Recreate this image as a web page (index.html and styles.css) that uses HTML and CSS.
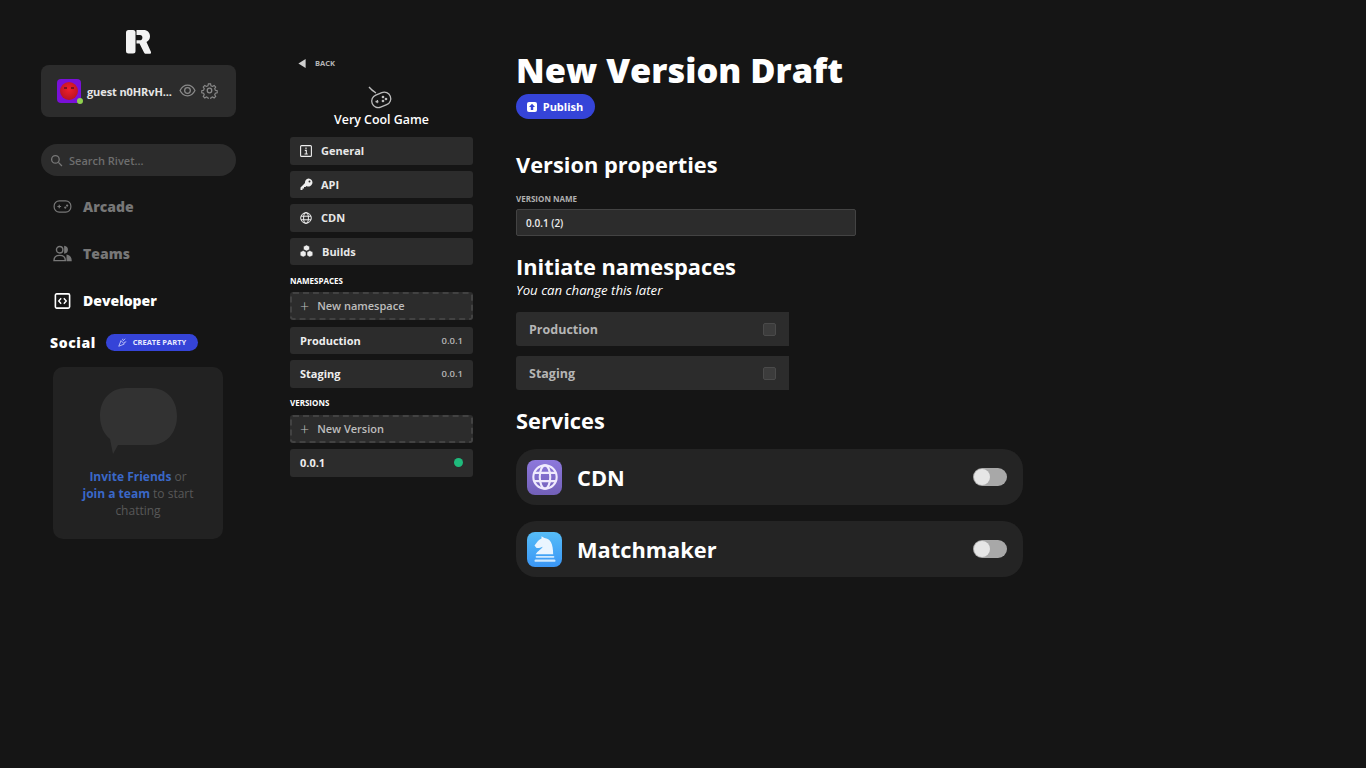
FILE: index.html
```html
<!DOCTYPE html>
<html lang="en">

<head>
    <meta charset="UTF-8">
    <title>New Version Draft</title>
    <link rel="stylesheet" href="styles.css">
</head>

<body>
    <div class="app">
        <aside class="sidebar">
            <svg class="logo" viewBox="0 0 25 24" width="25" height="24">
                <rect x="0" y="0" width="9.500" height="23.500" rx="2.500" fill="#f2f2f2" />
                <path d="M10.500 0H17.500C21.500 0 24 2.600 24 6.300C24 9 22.600 11 20.500 12L25 22C25.400 23 24.900 23.700 24 23.700H20C19 23.700 18.400 23.300 18 22.400L13.500 13.500H10.500V10.200H14.500C15.800 10.200 16.400 9 16.400 7.600C16.400 6 15.600 5 14 5H10.500Z" fill="#f2f2f2" />
            </svg>

            <div class="user-card">
                <div class="avatar">
                    <div class="avatar-face">
                        <span class="avatar-eyes"></span>
                    </div>
                    <span class="avatar-dot"></span>
                </div>
                <span class="user-name">guest n0HRvH...</span>
                <svg class="user-icon" viewBox="0 0 24 24" width="17" height="17" fill="none" stroke="#8a8a8a" stroke-width="1.800">
                    <path d="M1.500 12C4 7 8 4.500 12 4.500S20 7 22.500 12C20 17 16 19.500 12 19.500S4 17 1.500 12Z" />
                    <circle cx="12" cy="12" r="4" />
                </svg>
                <svg class="user-icon" viewBox="0 0 24 24" width="17" height="17" fill="none" stroke="#8a8a8a" stroke-width="1.800">
                    <circle cx="12" cy="12" r="3.200" />
                    <path d="M10.200 1.500h3.600l.6 3 2.500 1.100 2.600-1.600 2.500 2.600-1.600 2.500 1 2.500 3 .6v3.600l-3 .6-1 2.500 1.600 2.500-2.500 2.600-2.600-1.600-2.500 1-.6 3h-3.600l-.6-3-2.500-1-2.600 1.600-2.500-2.600 1.600-2.500-1-2.500-3-.6v-3.600l3-.6 1-2.500-1.600-2.500 2.500-2.600 2.600 1.600 2.500-1.100Z" transform="translate(1.400 1.400) scale(.88)" />
                </svg>
            </div>

            <div class="search">
                <svg viewBox="0 0 24 24" width="13" height="13" fill="none" stroke="#777" stroke-width="2.400">
                    <circle cx="10" cy="10" r="7" />
                    <path d="M15.500 15.500L22 22" />
                </svg>
                <span>Search Rivet...</span>
            </div>

            <nav class="nav">
                <a class="nav-item">
                    <svg viewBox="0 0 20 14" width="19" height="13" fill="none" stroke="#777" stroke-width="1.300">
                        <rect x="1" y="1" width="18" height="12" rx="5.500" />
                        <path d="M4.500 7h4M6.500 5v4" />
                        <circle cx="13" cy="8.200" r=".6" fill="#777" />
                        <circle cx="15" cy="6" r=".6" fill="#777" />
                    </svg>
                    Arcade
                </a>
                <a class="nav-item">
                    <svg viewBox="0 0 20 18" width="19" height="17" fill="none" stroke="#777" stroke-width="1.500">
                        <circle cx="7" cy="5" r="3.400" />
                        <path d="M1 16.500c0-3.500 2.500-5.500 6-5.500s6 2 6 5.500Z" />
                        <path d="M12.500 1.800a3.300 3.300 0 0 1 0 6.400Z" fill="#777" />
                        <path d="M15 11c2.500.5 4 2.500 4 5.500h-4Z" fill="#777" />
                    </svg>
                    Teams
                </a>
                <a class="nav-item active">
                    <svg viewBox="0 0 18 18" width="16" height="16" fill="none" stroke="#fff">
                        <rect x="1" y="1" width="16" height="16" rx="1.500" stroke-width="1.800" />
                        <path d="M7.500 6L4.800 9l2.700 3M10.500 6l2.700 3-2.700 3" stroke-width="1.600" />
                    </svg>
                    Developer
                </a>
            </nav>

            <div class="social-head">
                <span class="social-title">Social</span>
                <span class="party-btn">
                    <svg viewBox="0 0 12 12" width="9" height="9" fill="none" stroke="#dfe2ff" stroke-width="1">
                        <path d="M1 11L4 3.500L8.500 8Z" />
                        <path d="M6.500 4L9.500 1M8 6l3-1M6 2.500L6.500 1" />
                    </svg>
                    CREATE PARTY
                </span>
            </div>

            <div class="chat-card">
                <svg class="chat-bubble" viewBox="0 0 77 67" width="77" height="67">
                    <path d="M26 1H51C66 1 77 12 77 29C77 46 66 58 51 58H18L13 67L10 52C4 47 0 39 0 29C0 12 11 1 26 1Z" fill="#323232" />
                </svg>
                <p class="chat-text"><a>Invite Friends</a> or<br><a>join a team</a> to start<br>chatting</p>
            </div>
        </aside>

        <section class="game-menu">
            <div class="back">
                <svg viewBox="0 0 8 10" width="8" height="9">
                    <path d="M0 5L8 0V10Z" fill="#cfcfcf" />
                </svg>
                BACK
            </div>
            <svg class="game-icon" viewBox="0 0 24 24" width="24" height="24" fill="none" stroke="#bdbdbd" stroke-width="1.300">
                <path d="M1 1C3 3.500 5 5 8 7" />
                <rect x="3.500" y="7.500" width="19.500" height="13" rx="6.500" transform="rotate(-22 13 14)" />
                <path d="M7.500 15.500l3 .4M9.500 14l-.4 3.200" />
                <circle cx="15" cy="11" r=".7" fill="#bdbdbd" />
                <circle cx="18" cy="13" r=".7" fill="#bdbdbd" />
                <circle cx="15" cy="15" r=".7" fill="#bdbdbd" />
            </svg>
            <div class="game-title">Very Cool Game</div>

            <div class="menu-list">
                <a class="menu-item">
                    <svg viewBox="0 0 12 12" width="12" height="12" fill="none" stroke="#eee" stroke-width="1.100">
                        <rect x=".6" y=".6" width="10.800" height="10.800" rx="1" />
                        <path d="M6 2.600v1.300M4.800 5.400H6.300V9M4.500 9h3.200" />
                    </svg>
                    General
                </a>
                <a class="menu-item key">
                    <svg viewBox="0 0 13 13" width="13" height="13">
                        <path d="M8.500 0.500A4 4 0 1 1 6.500 8L5.500 9H4V10.500H2.500V12H.5V9.500L5 5A4 4 0 0 1 8.500 .5Z" fill="#eee" />
                        <circle cx="9.500" cy="3.500" r="1" fill="#2c2c2c" />
                    </svg>
                    API
                </a>
                <a class="menu-item">
                    <svg viewBox="0 0 12 12" width="12" height="12" fill="none" stroke="#eee" stroke-width="1">
                        <circle cx="6" cy="6" r="5.300" />
                        <ellipse cx="6" cy="6" rx="2.400" ry="5.300" />
                        <path d="M1 4.200h10M1 7.800h10" />
                    </svg>
                    CDN
                </a>
                <a class="menu-item">
                    <svg viewBox="0 0 13 12" width="13" height="12" fill="#eee" stroke="#2c2c2c" stroke-width=".5">
                        <path d="M6.500 0L9.500 1.500V4.500L6.500 6L3.500 4.500V1.500Z" />
                        <path d="M3.200 5.500L6 7V10.500L3.200 12L.2 10.500V7Z" />
                        <path d="M9.800 5.500L12.800 7V10.500L9.800 12L7 10.500V7Z" />
                    </svg>
                    Builds
                </a>
            </div>

            <h4 class="menu-head">NAMESPACES</h4>
            <div class="menu-list">
                <a class="menu-item dashed first-new"><span class="plus">+</span>New namespace</a>
                <a class="menu-item spaced"><b>Production</b><small>0.0.1</small></a>
                <a class="menu-item spaced"><b>Staging</b><small>0.0.1</small></a>
            </div>

            <h4 class="menu-head versions">VERSIONS</h4>
            <div class="menu-list">
                <a class="menu-item dashed"><span class="plus">+</span>New Version</a>
                <a class="menu-item spaced"><b>0.0.1</b><span class="live-dot"></span></a>
            </div>
        </section>

        <main class="content">
            <h1>New Version Draft</h1>
            <button class="publish">
                <svg viewBox="0 0 10 10" width="10" height="10">
                    <rect width="10" height="10" rx="2" fill="#fff" />
                    <path d="M5 1.800L8 5H6.200V8H3.800V5H2Z" fill="#3544d8" />
                </svg>
                Publish
            </button>

            <h2 class="props-title">Version properties</h2>
            <label class="field-label">VERSION NAME</label>
            <div class="text-input">0.0.1 (2)</div>

            <h2 class="ns-title">Initiate namespaces</h2>
            <p class="hint">You can change this later</p>
            <div class="ns-list">
                <div class="ns-row">Production<span class="check"></span></div>
                <div class="ns-row">Staging<span class="check"></span></div>
            </div>

            <h2 class="services-title">Services</h2>
            <div class="service">
                <div class="service-icon cdn">
                    <svg viewBox="0 0 24 24" width="28" height="28" fill="none" stroke="#efeafd" stroke-width="1.800">
                        <circle cx="12" cy="12" r="10" />
                        <ellipse cx="12" cy="12" rx="4.500" ry="10" />
                        <path d="M2.800 8.500h18.400M2.800 15.500h18.400" />
                    </svg>
                </div>
                <span class="service-name">CDN</span>
                <span class="toggle"><span class="knob"></span></span>
            </div>
            <div class="service">
                <div class="service-icon mm">
                    <svg viewBox="0 0 24 24" width="28" height="28">
                        <path d="M4 16.500C6 13 9 12.500 10 10C8 11 6 11.500 4.500 11L3 9C5 6.500 7 3.500 9 3V1L11.500 2.500C16.500 3 19 7 19 16.500Z" fill="#eaf5ff" />
                        <rect x="4" y="18" width="16" height="1.500" rx=".7" fill="#cfe9ff" />
                        <rect x="3" y="21" width="18" height="2" rx="1" fill="#cfe9ff" />
                    </svg>
                </div>
                <span class="service-name">Matchmaker</span>
                <span class="toggle"><span class="knob"></span></span>
            </div>
        </main>
    </div>
</body>

</html>
```
FILE: styles.css
```css
* {
    box-sizing: border-box;
}

body {
    margin: 0;
    height: 768px;
    overflow: hidden;
    background-color: #151515;
    color: #fff;
    font-family: "Open Sans", Arial, sans-serif;
}

h1, h2, h4, p {
    margin: 0;
}

.app {
    display: flex;
    align-items: flex-start;
}

/* left column */
.sidebar {
    width: 195px;
    margin-left: 41px;
    padding-top: 30px;
    display: flex;
    flex-direction: column;
}

.logo {
    align-self: center;
    margin-bottom: 11px;
}

.user-card {
    height: 52px;
    padding: 0 18px 0 16px;
    display: flex;
    align-items: center;
    background-color: #2c2c2c;
    border-radius: 8px;
}

.avatar {
    position: relative;
    width: 24px;
    height: 24px;
    padding: 3px;
    flex-shrink: 0;
    background-color: #7a10d8;
    border-radius: 4px;
}

.avatar-face {
    width: 18px;
    height: 18px;
    padding: 5px 0 0 4px;
    border-radius: 50%;
    background: radial-gradient(circle at 50% 40%, #f0202c, #a80f20);
}

.avatar-eyes {
    display: block;
    width: 10px;
    height: 2px;
    border-left: 3px solid #7c1020;
    border-right: 3px solid #7c1020;
}

.avatar-dot {
    position: absolute;
    right: -2px;
    bottom: -1px;
    width: 6px;
    height: 6px;
    border-radius: 50%;
    background-color: #8fd14f;
}

.user-name {
    flex: 1;
    margin-left: 6px;
    font-size: 11px;
    font-weight: 700;
    letter-spacing: -.1px;
    color: #e6e6e6;
    white-space: nowrap;
}

.user-icon {
    margin-left: 5px;
    margin-bottom: 2px;
    flex-shrink: 0;
}

.search {
    height: 32px;
    margin-top: 27px;
    padding-left: 9px;
    display: flex;
    align-items: center;
    gap: 6px;
    background-color: #2c2c2c;
    border-radius: 16px;
    font-size: 11px;
    font-weight: 600;
    color: #6e6e6e;
}

.nav {
    margin-top: 7px;
    display: flex;
    flex-direction: column;
}

.nav-item {
    height: 47px;
    padding-left: 12px;
    display: flex;
    align-items: center;
    gap: 11px;
    font-size: 14px;
    font-weight: 800;
    color: #777;
}

.nav-item svg {
    width: 19px;
}

.nav-item.active {
    color: #fff;
}

.social-head {
    margin: 9px 0 16px 9px;
    height: 18px;
    display: flex;
    align-items: center;
    gap: 10px;
}

.social-title {
    font-size: 14px;
    font-weight: 800;
    letter-spacing: .6px;
}

.party-btn {
    width: 92px;
    height: 17px;
    display: flex;
    align-items: center;
    justify-content: center;
    gap: 6px;
    background-color: #3544d8;
    border-radius: 9px;
    font-size: 7.500px;
    font-weight: 700;
    color: #e8eaff;
}

.chat-card {
    width: 170px;
    height: 172px;
    margin-left: 12px;
    padding-top: 20px;
    display: flex;
    flex-direction: column;
    align-items: center;
    background-color: #222;
    border-radius: 10px;
}

.chat-text {
    margin-top: 14px;
    font-size: 12px;
    line-height: 17px;
    text-align: center;
    color: #585858;
}

.chat-text a {
    font-weight: 700;
    color: #3a68c8;
}

/* middle column */
.game-menu {
    width: 183px;
    margin-left: 54px;
    padding-top: 57px;
    display: flex;
    flex-direction: column;
}

.back {
    height: 12px;
    padding-left: 8px;
    display: flex;
    align-items: center;
    gap: 9px;
    font-size: 7.500px;
    font-weight: 700;
    color: #b5b5b5;
}

.game-icon {
    align-self: center;
    margin-top: 17px;
    margin-left: -4px;
}

.game-title {
    margin-top: 1px;
    margin-bottom: 9px;
    text-align: center;
    font-size: 12.400px;
    font-weight: 600;
    line-height: 17px;
}

.menu-list {
    display: flex;
    flex-direction: column;
    gap: 6px;
}

.menu-item {
    height: 27.500px;
    padding: 0 10px;
    display: flex;
    align-items: center;
    gap: 9px;
    background-color: #2c2c2c;
    border-radius: 3px;
    font-size: 11px;
    font-weight: 700;
    color: #e8e8e8;
}

.menu-item.key {
    gap: 8px;
}

.menu-item b {
    font-weight: 700;
    color: #eee;
}

.menu-item small {
    font-size: 9.500px;
    font-weight: 600;
    color: #b5b5b5;
}

.menu-item.spaced {
    height: 27px;
    justify-content: space-between;
}

.menu-item.spaced:last-child {
    height: 28px;
    padding-bottom: 1px;
}

.menu-item.dashed {
    height: 28px;
    border: 2px dashed #424242;
    padding: 0 8px 1px;
    gap: 8px;
    font-weight: 600;
    color: #bdbdbd;
}

.menu-item.first-new {
    margin-bottom: 1px;
}

.plus {
    font-size: 16px;
    font-weight: 300;
    line-height: 1;
    color: #bdbdbd;
}

.live-dot {
    width: 9px;
    height: 9px;
    border-radius: 50%;
    background-color: #1fba7c;
}

.menu-head {
    margin: 10px 0 5px;
    font-size: 8px;
    line-height: 12px;
    font-weight: 700;
}

.menu-head.versions {
    margin-top: 9px;
    margin-bottom: 6px;
}

/* main column */
.content {
    width: 507px;
    margin-left: 43px;
    padding-top: 46px;
}

h1 {
    font-size: 34.400px;
    font-weight: 800;
    line-height: 48px;
}

.publish {
    height: 25px;
    width: 79px;
    display: flex;
    align-items: center;
    justify-content: center;
    gap: 6px;
    border: none;
    padding: 0 1px 0 0;
    background-color: #3544d8;
    border-radius: 13px;
    font-family: inherit;
    font-size: 11px;
    font-weight: 700;
    color: #fff;
}

h2 {
    font-size: 21.800px;
    font-weight: 700;
    line-height: 30px;
}

.props-title {
    margin-top: 31px;
}

.field-label {
    display: block;
    margin-top: 13px;
    font-size: 8px;
    font-weight: 700;
    line-height: 11px;
    color: #b0b0b0;
}

.text-input {
    width: 340px;
    height: 27px;
    margin-top: 5px;
    padding-left: 9px;
    display: flex;
    align-items: center;
    background-color: #2c2c2c;
    border: 1px solid #434343;
    border-radius: 2px;
    font-size: 10px;
    font-weight: 600;
    color: #eee;
}

.ns-title {
    margin-top: 16px;
}

.hint {
    margin-top: 0;
    font-size: 13.200px;
    font-style: italic;
    line-height: 17px;
}

.ns-list {
    width: 273px;
    margin-top: 13px;
    display: flex;
    flex-direction: column;
    gap: 10px;
}

.ns-row {
    height: 34px;
    padding: 0 13px;
    display: flex;
    align-items: center;
    justify-content: space-between;
    background-color: #2c2c2c;
    border-radius: 3px 0 0 3px;
    font-size: 12.500px;
    font-weight: 700;
    color: #b5b5b5;
}

.check {
    width: 13px;
    height: 13px;
    background-color: #3c3c3c;
    border: 1px solid #4a4a4a;
    border-radius: 2px;
}

.services-title {
    margin-top: 16px;
    margin-bottom: 13px;
}

.service {
    height: 56px;
    margin-bottom: 16px;
    padding: 0 16px 0 11px;
    display: flex;
    align-items: center;
    background-color: #242424;
    border-radius: 20px;
}

.service-icon {
    width: 35px;
    height: 35px;
    display: flex;
    align-items: center;
    justify-content: center;
    border-radius: 8px;
}

.service-icon.cdn {
    background: linear-gradient(#8d78dc, #7260b8);
}

.service-icon.mm {
    background: linear-gradient(#56bdf8, #3a96f5);
}

.service-name {
    flex: 1;
    margin-left: 15px;
    font-size: 21.800px;
    font-weight: 700;
}

.toggle {
    width: 34px;
    height: 18px;
    padding: 1px;
    background-color: #a8a8a8;
    border-radius: 9px;
}

.knob {
    display: block;
    width: 16px;
    height: 16px;
    background-color: #e6e6e6;
    border-radius: 50%;
}
```
